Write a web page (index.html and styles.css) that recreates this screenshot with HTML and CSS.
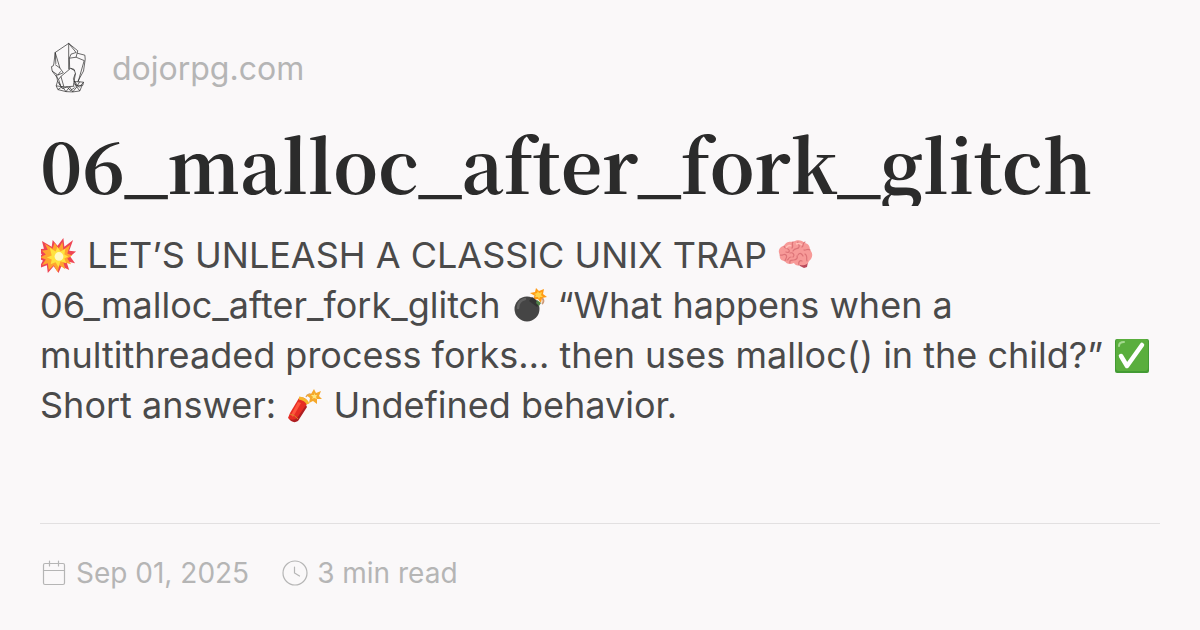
FILE: index.html
```html
<!DOCTYPE html>
<html lang="en">
<head>
<meta charset="utf-8">
<meta name="viewport" content="width=device-width, initial-scale=1">
<title>06_malloc_after_fork_glitch</title>
<link rel="stylesheet" href="styles.css">
</head>
<body>
<article class="card">
  <header class="site">
    <svg class="logo" viewBox="1 15 166 166" aria-hidden="true">
      <path d="M86 25 46 52 42 86 40 92 35 94 37 107 54 119 70 112 60 98 46 88M86 25 113 47 111 54 134 60 135 72 130 107 113 138M86 25 86 102M46 52 48 86M46 52 60 98M86 25 108 52 93 57 88 69 89 101M88 69 108 66 111 54M108 66 132 76M132 76 114 139M37 107 56 132 63 123 92 99 102 102 106 114 100 130 109 155M92 99 104 106M63 123 72 154M54 119 62 108M50 118 53 137 61 149M56 132 62 150M106 114 100 151M101 138 130 140 128 149 108 151M130 140 118 155 101 144"/>
      <path d="M53 137 49 151 54 162 67 153 78 168 89 154 98 169 110 154 119 166 126 149M54 162 78 168 98 169 119 166M49 151 73 154 103 152M58 144 67 159 82 154 91 165 104 156M104 138 112 150 119 138"/>
    </svg>
    <a class="domain" href="#">dojorpg.com</a>
  </header>
  <h1 class="title">06_malloc_after_fork_glitch</h1>
  <p class="summary">
    <svg class="emoji" viewBox="0 0 37 37" role="img" aria-label="Collision"><path fill="#ef4553" d="m1 3 10 6 1-7 5 6 6-8 1 9 9-7-4 11 7 1-6 5 5 7-9-2 3 9-8-4-3 7-5-7-6 7-1-8-8 3 4-8-7-2 6-4-5-5 7-1z"/><path fill="#ffa52f" d="m4 6 8 5 2-6 4 6 4-7 1 8 7-5-3 9 5 2-5 3 4 6-8-2 2 7-6-4-2 7-4-7-5 5-1-7-6 2 4-6-6-2 6-3-4-4 6-1z"/><path fill="#ffe23f" d="m9 10 6 4 2-5 3 5 5-3-1 6 4 2-4 2 2 5-6-2-2 6-3-5-5 2 1-5-5-2 5-2z"/><circle cx="18.500" cy="19" r="4.500" fill="#fff9c4"/></svg>
    LET’S UNLEASH A CLASSIC UNIX TRAP
    <svg class="emoji" viewBox="1 1 36 36" role="img" aria-label="Brain"><path fill="#b94a5c" d="m21 26 10-1-1 5-3 1-4-2z"/><path fill="#f79a98" d="M3 18C0 14 3 9 7 9c1-4 6-5 9-4 4-3 9-2 12 1 4 1 5 4 5 7 4 4 2 9-1 11-1 4-6 5-9 4-3 1-5 0-6-2-4 2-8 1-9-2-4 0-6-3-5-6z"/><g fill="none" stroke="#dd7478" stroke-width="1.200" stroke-linecap="round"><path d="M7 9c0 3 4 2 5 4s-1 3-3 2M3 18c3 1 4-2 6 0s-1 4-1 6M16 5c-2 2 1 4-1 6m1 3c2-4 5-1 6-4s-2-3-1-5m7 0c-3 1-1 4-3 5m8 3c-3-2-4 1-6 0m-14 3c3-1 5 2 3 4m-3 6c-1-3 2-3 4-3s4-2 3-4m2 9c-1-3 1-5 3-4m5 0c-1-3 1-5-2-7m-7 1c2-3 4-1 5 1m-16 4c2 0 1-3 4-3"/></g><path d="M9 11c2-3 4-3 5-2m5-2c3-1 5 0 6 1" fill="none" stroke="#ffc0b8" stroke-width="1.500"/></svg>
    06_malloc_after_fork_glitch
    <svg class="emoji" viewBox="0 0 36 36" role="img" aria-label="Bomb"><path d="M22 10c2-4 6-2 8 0s2 4 0 6" fill="none" stroke="#ce9b79" stroke-width="1.800"/><path fill="#ff9b16" d="m18 5 5-1 1-4 3 3 5-2-1 5 4 3-5 1-1 5-3-4-5 1 2-4z"/><path fill="#ffd44b" d="m22 6 3-1 1-2 1 2 3-1-1 3 2 2-3 0-1 2-1-2-3 0 1-2z"/><circle cx="15" cy="21" r="12.500" fill="#454545"/><path fill="#333" d="m20 9 8 6-3 4-8-6z"/><path fill="#508247" d="m25 12 4 3-2 3-3-3z"/><path d="M6 20c0-5 3-8 7-9" fill="none" stroke="#606060" stroke-width="2.500" stroke-linecap="round"/></svg>
    “What happens when a multithreaded process forks… then uses malloc() in the child?”
    <svg class="emoji" viewBox="0 0 36 36" role="img" aria-label="Check mark"><rect x="1" y="1" width="34" height="34" rx="2" fill="#439b34"/><rect x="2" y="1" width="32" height="32" rx="3" fill="#5aae3d"/><path d="M5 8q0-4 5-4" fill="none" stroke="#a5d990" stroke-width="2" stroke-linecap="round"/><path d="m7 18 6 10L28 7" fill="none" stroke="#fff" stroke-width="4.500" stroke-linecap="round" stroke-linejoin="round"/></svg>
    Short answer:
    <svg class="emoji" viewBox="0 0 36 36" role="img" aria-label="Firecracker"><path d="M19 9c2-4 4-3 6-2" fill="none" stroke="#d6a26c" stroke-width="1.500"/><path fill="#f5a82b" d="m27 1 2 4 5-2-2 5 3 3-5 0 0 5-4-3-4 2 1-5-4-3 5-1z"/><path fill="#ffe57b" d="m27 5 1 2 2 0-1 2 1 2-3-1-2 1 1-2-2-2 3 0z"/><path fill="#e62c24" d="M12 10q6-2 9 4L11 32q-5 4-10-2l2-5z"/><path fill="#ff553e" d="m11 14 3 1L6 29l-2-2z"/><path fill="#ae1f22" d="m19 17 1 2-9 14q-5 3-9-2 5 2 8-1z"/><path d="M12 10q7 1 9 6" fill="none" stroke="#f6b52b" stroke-width="3"/><path d="M3 26q5 1 8 5" fill="none" stroke="#d98528" stroke-width="1"/></svg>
    Undefined behavior.
  </p>
  <footer class="meta">
    <span class="meta-item">
      <svg class="icon" viewBox="0 0 28 28" aria-hidden="true"><rect x="3.500" y="4.500" width="21" height="21" rx="1.500"/><path d="M3.500 11.500h21M9.500 2v5M18.500 2v5"/></svg>
      <time datetime="2025-09-01">Sep 01, 2025</time>
    </span>
    <span class="meta-item">
      <svg class="icon" viewBox="0 0 28 28" aria-hidden="true"><circle cx="14" cy="14" r="12"/><path d="M13.500 8v6l5 3"/></svg>
      <span>3 min read</span>
    </span>
  </footer>
</article>
</body>
</html>
```
FILE: styles.css
```css
* { box-sizing: border-box; }

body {
  margin: 0;
  background: #faf8f9;
  color: #4a4a4a;
  font-family: Inter, sans-serif;
}

.card {
  display: flex;
  flex-direction: column;
  min-height: 100vh;
  padding: 40px;
}

.site {
  display: flex;
  align-items: center;
  gap: 16px;
}

.logo {
  width: 56px;
  height: 56px;
  fill: none;
  stroke: #222;
  stroke-width: 2;
  stroke-linejoin: round;
}

.domain {
  color: #b5b5b5;
  font-size: 32px;
  text-decoration: none;
}

.title {
  margin: 24px 0;
  overflow: hidden;
  color: #2b2b2b;
  font-family: "Noto Serif CJK SC", "Noto Serif CJK JP", "Source Serif 4", "Liberation Serif", serif;
  font-size: 72px;
  font-weight: 700;
  font-kerning: none;
  font-variant-ligatures: none;
  line-height: 86px;
  white-space: nowrap;
}

.summary {
  margin: 0;
  font-size: 36px;
  line-height: 50px;
}

.emoji {
  width: 36px;
  height: 36px;
  margin-left: 1px;
  vertical-align: -6px;
}

.meta {
  display: flex;
  gap: 32px;
  margin-top: auto;
  padding-top: 32px;
  border-top: 1px solid #e2e0e1;
  color: #b5b5b5;
  font-size: 28px;
  line-height: 34px;
}

.meta-item {
  display: flex;
  align-items: center;
  gap: 8px;
}

.icon {
  width: 28px;
  height: 28px;
  fill: none;
  stroke: #b5b5b5;
  stroke-width: 1.2;
  stroke-linecap: round;
}
```
